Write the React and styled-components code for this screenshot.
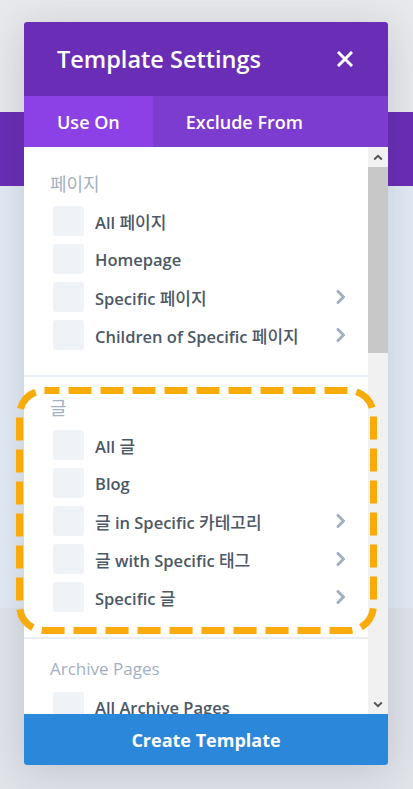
import React from "react";
import styled, { createGlobalStyle } from "styled-components";

const Global = createGlobalStyle`
  html, body { margin: 0; padding: 0; }
  body { font-family: "Open Sans", "Noto Sans CJK KR", sans-serif; }
  * { box-sizing: border-box; }
`;

const Page = styled.div`
  position: relative;
  width: 413px;
  height: 789px;
  overflow: hidden;
  display: flex;
  flex-direction: column;
  background: #e6e8eb;
`;

const Band = styled.div`
  height: ${(p) => p.$h}px;
  flex: ${(p) => (p.$grow ? 1 : "none")};
  background: ${(p) => p.$bg};
`;

const Modal = styled.div`
  position: absolute;
  left: 24px;
  top: 22px;
  width: 364px;
  height: 743px;
  border-radius: 3px;
  overflow: hidden;
  display: flex;
  flex-direction: column;
  background: #fff;
  box-shadow: 0 6px 40px rgba(40, 50, 80, 0.18);
`;

const Header = styled.div`
  height: 74px;
  flex: none;
  background: #6a2db5;
  display: flex;
  align-items: center;
  justify-content: space-between;
  padding: 0 34px 0 33px;
`;

const Title = styled.h1`
  margin: 0;
  color: #fff;
  font-size: 23.5px;
  font-weight: 600;
`;

const Close = styled.button`
  border: 0;
  background: none;
  padding: 0;
  width: 18px;
  height: 18px;
  display: flex;
  align-items: center;
  justify-content: center;
`;

const Tabs = styled.div`
  height: 51px;
  flex: none;
  display: flex;
  background: #7b3ccf;
`;

const Tab = styled.div`
  display: flex;
  align-items: center;
  padding: 0 33px;
  color: #fff;
  font-size: 18px;
  font-weight: 600;
  background: ${(p) => (p.$active ? "#8b41e6" : "transparent")};
`;

const Body = styled.div`
  flex: 1;
  min-height: 0;
  display: flex;
`;

const Content = styled.div`
  flex: 1;
  min-width: 0;
  overflow: hidden;
  padding-top: 6px;
`;

const Section = styled.section`
  padding: 18px 21px 25px 26px;
  border-bottom: 2px solid #e8eef6;
`;

const SectionLabel = styled.div`
  height: 24px;
  line-height: 24px;
  color: #a3b0c2;
  font-size: 17px;
  font-weight: 400;
`;

const List = styled.div`
  margin-top: 11px;
  padding-left: 3px;
  display: flex;
  flex-direction: column;
  gap: 8px;
`;

const Row = styled.div`
  display: flex;
  align-items: center;
  height: 30px;
`;

const Check = styled.span`
  width: 31px;
  height: 30px;
  flex: none;
  border-radius: 3px;
  background: #eff3f8;
`;

const ItemText = styled.span`
  flex: 1;
  margin-left: 11px;
  color: #4c5866;
  font-size: 16.5px;
  font-weight: 600;
  white-space: nowrap;
`;

const Hangul = styled.span`
  font-family: "Noto Sans CJK KR", sans-serif;
  font-weight: ${(p) => p.$weight};
  font-size: ${(p) => p.$size};
`;

const Scrollbar = styled.div`
  width: 20px;
  flex: none;
  background: #f1f1f1;
  display: flex;
  flex-direction: column;
`;

const ScrollArrow = styled.div`
  height: 20px;
  flex: none;
  display: flex;
  align-items: center;
  justify-content: center;
`;

const Thumb = styled.div`
  height: 186px;
  background: #c8c8c8;
`;

const Spacer = styled.div`
  flex: 1;
`;

const CreateButton = styled.button`
  height: 51px;
  flex: none;
  border: 0;
  background: #2b87da;
  color: #fff;
  font-family: "Open Sans", sans-serif;
  font-size: 18px;
  font-weight: 700;
  padding: 0;
`;

const Highlight = styled.svg`
  position: absolute;
  left: 16px;
  top: 387px;
  pointer-events: none;
`;

const Chevron = () => (
  <svg width="12" height="14" viewBox="0 0 12 14">
    <path d="M3 1.5 L8.5 7 L3 12.5" fill="none" stroke="#a3b0c2" strokeWidth="3" strokeLinecap="round" strokeLinejoin="round" />
  </svg>
);

const ArrowIcon = ({ down }) => (
  <svg width="10" height="7" viewBox="0 0 10 7">
    <path
      d={down ? "M1.2 1.5 L5 5.2 L8.8 1.5" : "M1.2 5.5 L5 1.8 L8.8 5.5"}
      fill="none"
      stroke="#555"
      strokeWidth="2"
    />
  </svg>
);

const Mixed = ({ text, weight, size }) =>
  text.split(/([\uAC00-\uD7A3]+)/).map((part, i) =>
    /[\uAC00-\uD7A3]/.test(part) ? (
      <Hangul key={i} $weight={weight} $size={size}>
        {part}
      </Hangul>
    ) : (
      part
    )
  );

const sections = [
  {
    label: "페이지",
    items: [
      ["All 페이지", false],
      ["Homepage", false],
      ["Specific 페이지", true],
      ["Children of Specific 페이지", true],
    ],
  },
  {
    label: "글",
    items: [
      ["All 글", false],
      ["Blog", false],
      ["글 in Specific 카테고리", true],
      ["글 with Specific 태그", true],
      ["Specific 글", true],
    ],
  },
  {
    label: "Archive Pages",
    items: [
      ["All Archive Pages", false],
      ["Specific Archive Pages", true],
    ],
  },
];

export default function App() {
  return (
    <>
      <Global />
      <Page>
        <Band $h={112} $bg="#e8e9ec" />
        <Band $h={74} $bg="#6a2db5" />
        <Band $h={422} $bg="#e3ebf5" />
        <Band $grow $bg="#e1e4e9" />

        <Modal>
          <Header>
            <Title>Template Settings</Title>
            <Close aria-label="Close">
              <svg width="16" height="16" viewBox="0 0 16 16">
                <path d="M2 2 L14 14 M14 2 L2 14" stroke="#fff" strokeWidth="3" strokeLinecap="square" />
              </svg>
            </Close>
          </Header>
          <Tabs>
            <Tab $active>Use On</Tab>
            <Tab>Exclude From</Tab>
          </Tabs>
          <Body>
            <Content>
              {sections.map((s) => (
                <Section key={s.label}>
                  <SectionLabel>
                    <Mixed text={s.label} weight={400} size="18px" />
                  </SectionLabel>
                  <List>
                    {s.items.map(([t, more]) => (
                      <Row key={t}>
                        <Check />
                        <ItemText>
                          <Mixed text={t} weight={500} size="17px" />
                        </ItemText>
                        {more && <Chevron />}
                      </Row>
                    ))}
                  </List>
                </Section>
              ))}
            </Content>
            <Scrollbar>
              <ScrollArrow>
                <ArrowIcon />
              </ScrollArrow>
              <Thumb />
              <Spacer />
              <ScrollArrow>
                <ArrowIcon down />
              </ScrollArrow>
            </Scrollbar>
          </Body>
          <CreateButton>Create Template</CreateButton>
        </Modal>

        <Highlight width="361" height="247" viewBox="0 0 361 247">
          <rect
            x="3.5"
            y="3.5"
            width="354"
            height="240"
            rx="25"
            fill="none"
            stroke="#f9ab0b"
            strokeWidth="7"
            strokeDasharray="23 9"
            strokeDashoffset="8"
          />
        </Highlight>
      </Page>
    </>
  );
}
